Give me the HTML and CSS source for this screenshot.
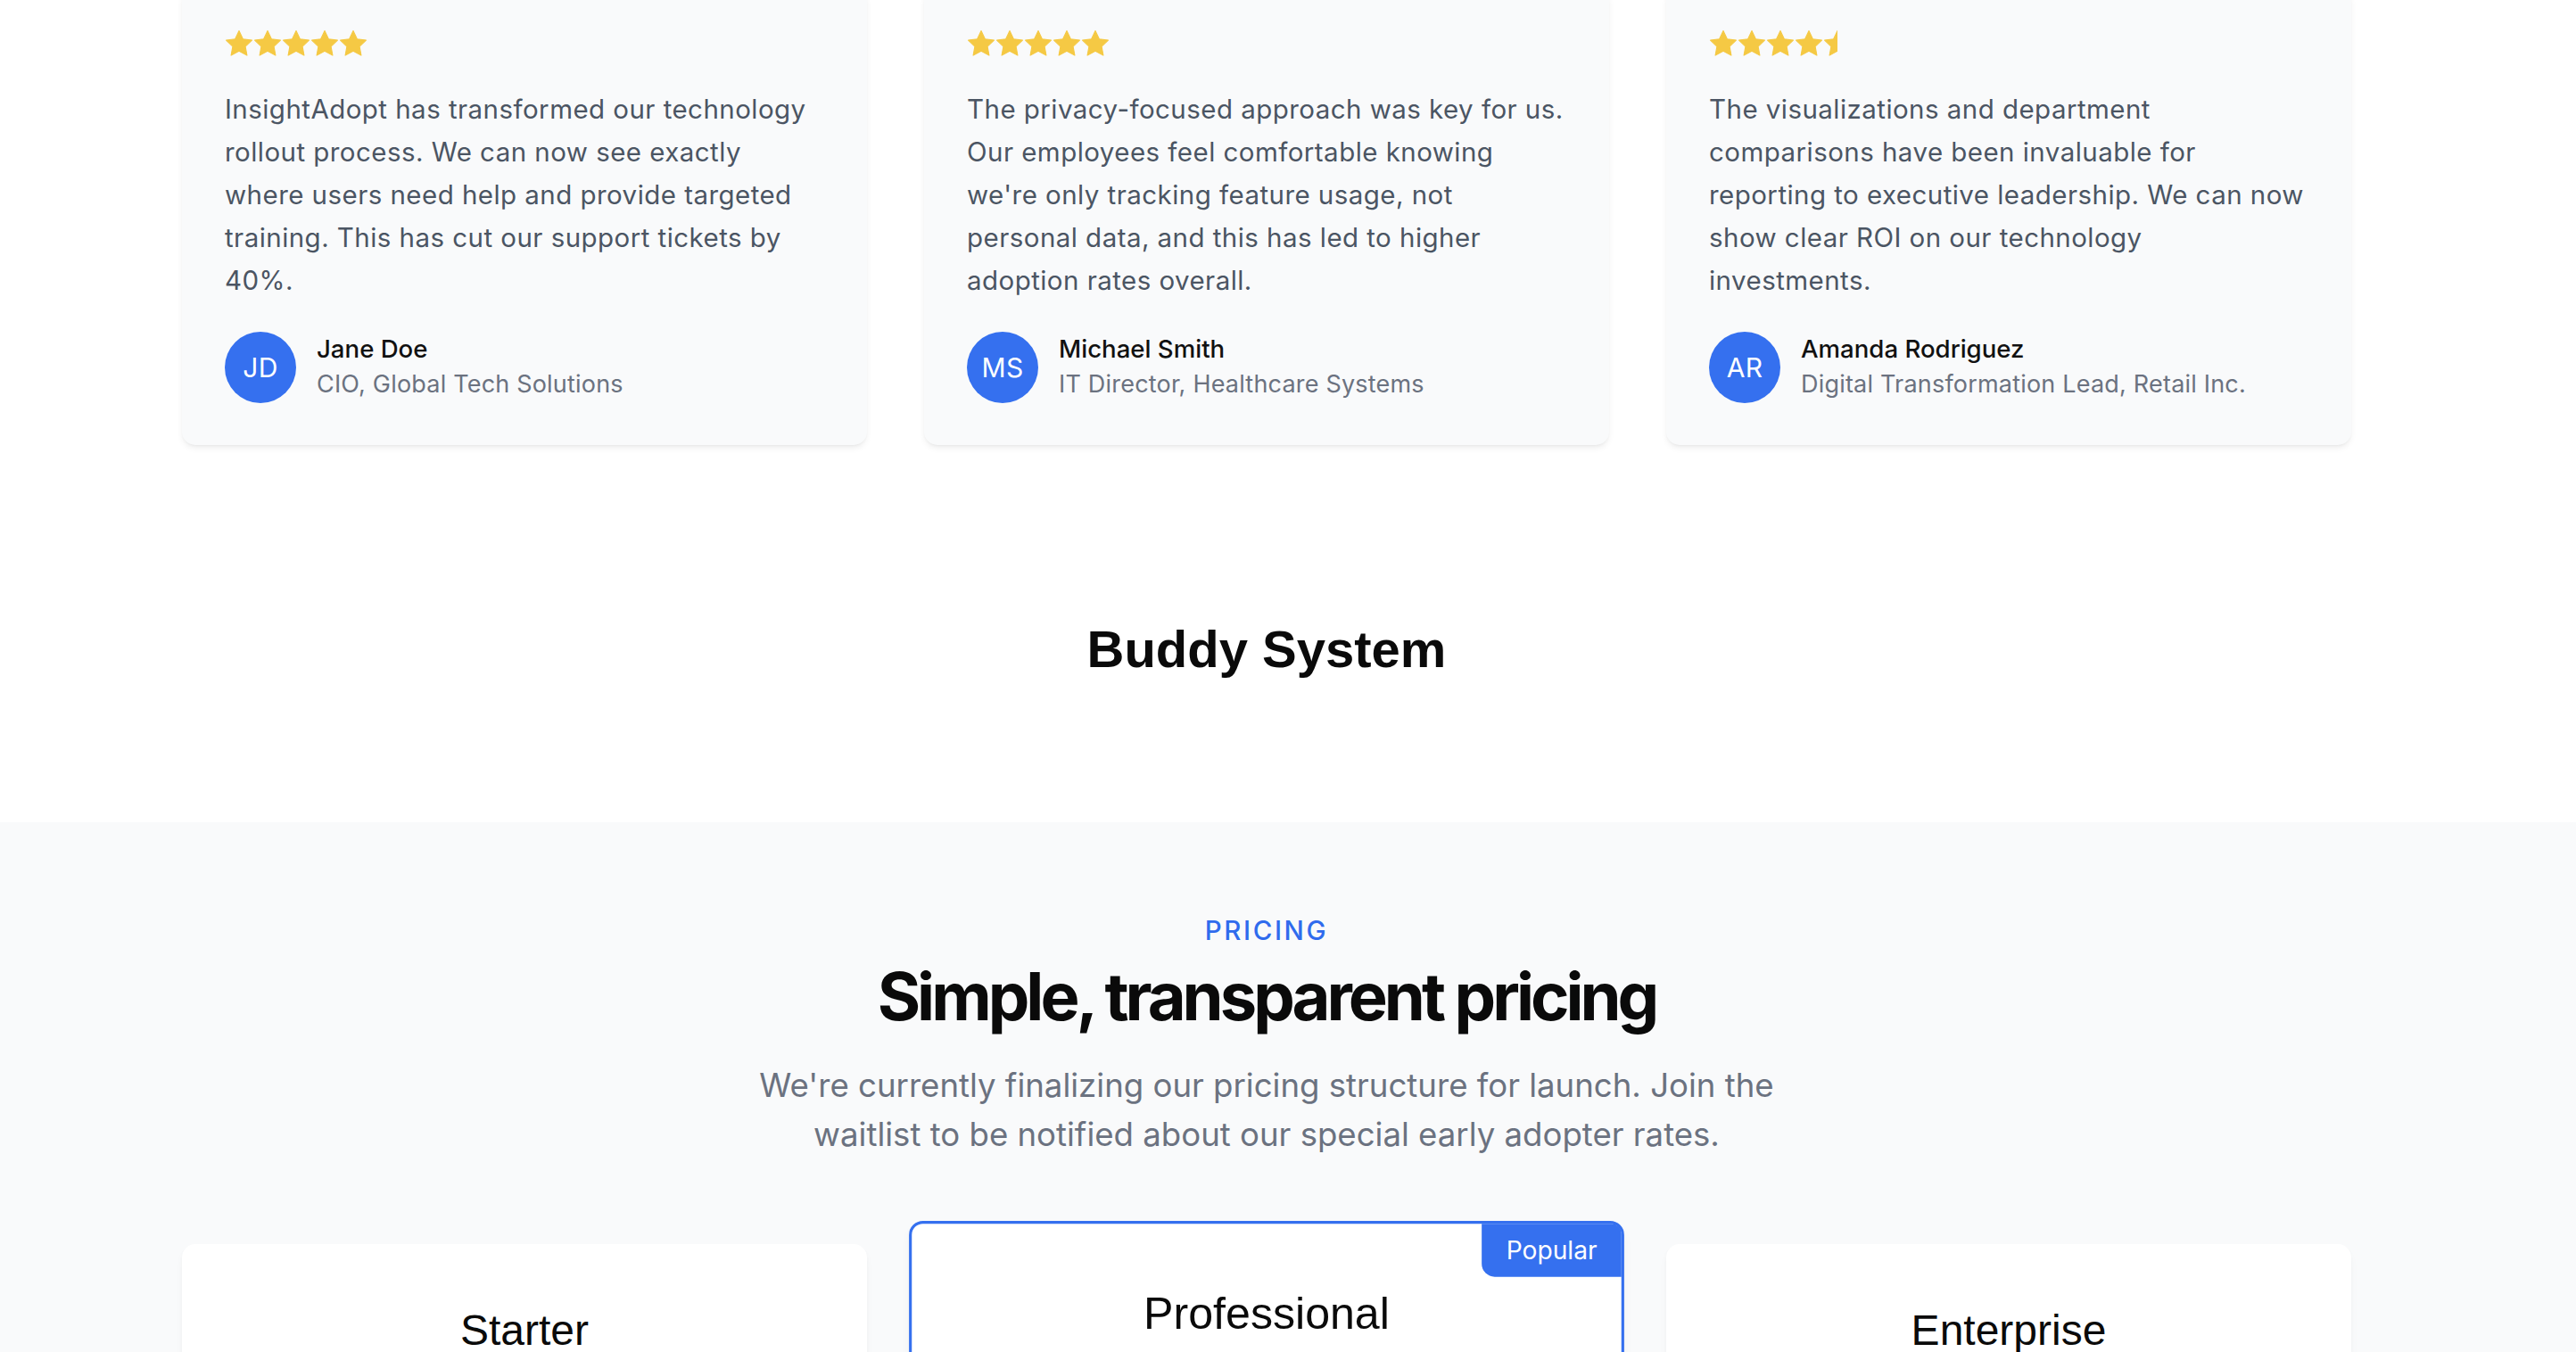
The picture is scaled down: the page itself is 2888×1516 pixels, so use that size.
FILE: index.html
```html
<!DOCTYPE html>
<html lang="en">
<head>
<meta charset="utf-8">
<title>InsightAdopt — Testimonials &amp; Pricing</title>
<link rel="stylesheet" href="styles.css">
</head>
<body>
<div class="page">
  <section class="testimonials">
    <div class="inner grid3 t-grid">
      <article class="t-card">
        <div class="stars">
          <svg class="star" viewBox="0 0 24 24"><polygon points="12,1.2 15.29,8.07 22.84,9.08 17.33,14.33 18.7,21.82 12,18.2 5.3,21.82 6.67,14.33 1.16,9.08 8.71,8.07"/></svg>
          <svg class="star" viewBox="0 0 24 24"><polygon points="12,1.2 15.29,8.07 22.84,9.08 17.33,14.33 18.7,21.82 12,18.2 5.3,21.82 6.67,14.33 1.16,9.08 8.71,8.07"/></svg>
          <svg class="star" viewBox="0 0 24 24"><polygon points="12,1.2 15.29,8.07 22.84,9.08 17.33,14.33 18.7,21.82 12,18.2 5.3,21.82 6.67,14.33 1.16,9.08 8.71,8.07"/></svg>
          <svg class="star" viewBox="0 0 24 24"><polygon points="12,1.2 15.29,8.07 22.84,9.08 17.33,14.33 18.7,21.82 12,18.2 5.3,21.82 6.67,14.33 1.16,9.08 8.71,8.07"/></svg>
          <svg class="star" viewBox="0 0 24 24"><polygon points="12,1.2 15.29,8.07 22.84,9.08 17.33,14.33 18.7,21.82 12,18.2 5.3,21.82 6.67,14.33 1.16,9.08 8.71,8.07"/></svg>
        </div>
        <p class="quote">InsightAdopt has transformed our technology rollout process. We can now see exactly where users need help and provide targeted training. This has cut our support tickets by 40%.</p>
        <div class="author">
          <div class="avatar">JD</div>
          <div class="who">
            <div class="name">Jane Doe</div>
            <div class="role">CIO, Global Tech Solutions</div>
          </div>
        </div>
      </article>

      <article class="t-card">
        <div class="stars">
          <svg class="star" viewBox="0 0 24 24"><polygon points="12,1.2 15.29,8.07 22.84,9.08 17.33,14.33 18.7,21.82 12,18.2 5.3,21.82 6.67,14.33 1.16,9.08 8.71,8.07"/></svg>
          <svg class="star" viewBox="0 0 24 24"><polygon points="12,1.2 15.29,8.07 22.84,9.08 17.33,14.33 18.7,21.82 12,18.2 5.3,21.82 6.67,14.33 1.16,9.08 8.71,8.07"/></svg>
          <svg class="star" viewBox="0 0 24 24"><polygon points="12,1.2 15.29,8.07 22.84,9.08 17.33,14.33 18.7,21.82 12,18.2 5.3,21.82 6.67,14.33 1.16,9.08 8.71,8.07"/></svg>
          <svg class="star" viewBox="0 0 24 24"><polygon points="12,1.2 15.29,8.07 22.84,9.08 17.33,14.33 18.7,21.82 12,18.2 5.3,21.82 6.67,14.33 1.16,9.08 8.71,8.07"/></svg>
          <svg class="star" viewBox="0 0 24 24"><polygon points="12,1.2 15.29,8.07 22.84,9.08 17.33,14.33 18.7,21.82 12,18.2 5.3,21.82 6.67,14.33 1.16,9.08 8.71,8.07"/></svg>
        </div>
        <p class="quote">The privacy-focused approach was key for us. Our employees feel comfortable knowing we're only tracking feature usage, not personal data, and this has led to higher adoption rates overall.</p>
        <div class="author">
          <div class="avatar">MS</div>
          <div class="who">
            <div class="name">Michael Smith</div>
            <div class="role">IT Director, Healthcare Systems</div>
          </div>
        </div>
      </article>

      <article class="t-card">
        <div class="stars">
          <svg class="star" viewBox="0 0 24 24"><polygon points="12,1.2 15.29,8.07 22.84,9.08 17.33,14.33 18.7,21.82 12,18.2 5.3,21.82 6.67,14.33 1.16,9.08 8.71,8.07"/></svg>
          <svg class="star" viewBox="0 0 24 24"><polygon points="12,1.2 15.29,8.07 22.84,9.08 17.33,14.33 18.7,21.82 12,18.2 5.3,21.82 6.67,14.33 1.16,9.08 8.71,8.07"/></svg>
          <svg class="star" viewBox="0 0 24 24"><polygon points="12,1.2 15.29,8.07 22.84,9.08 17.33,14.33 18.7,21.82 12,18.2 5.3,21.82 6.67,14.33 1.16,9.08 8.71,8.07"/></svg>
          <svg class="star" viewBox="0 0 24 24"><polygon points="12,1.2 15.29,8.07 22.84,9.08 17.33,14.33 18.7,21.82 12,18.2 5.3,21.82 6.67,14.33 1.16,9.08 8.71,8.07"/></svg>
          <svg class="star star-half" viewBox="0 0 12 24"><polygon points="12,1.2 15.29,8.07 22.84,9.08 17.33,14.33 18.7,21.82 12,18.2 5.3,21.82 6.67,14.33 1.16,9.08 8.71,8.07"/></svg>
        </div>
        <p class="quote">The visualizations and department comparisons have been invaluable for reporting to executive leadership. We can now show clear ROI on our technology investments.</p>
        <div class="author">
          <div class="avatar">AR</div>
          <div class="who">
            <div class="name">Amanda Rodriguez</div>
            <div class="role">Digital Transformation Lead, Retail Inc.</div>
          </div>
        </div>
      </article>
    </div>
  </section>

  <section class="buddy">
    <h2 class="buddy-title">Buddy System</h2>
  </section>

  <section class="pricing">
    <div class="inner">
      <div class="eyebrow">PRICING</div>
      <h2 class="p-title">Simple, transparent pricing</h2>
      <p class="p-sub">We're currently finalizing our pricing structure for launch. Join the waitlist to be notified about our special early adopter rates.</p>
      <div class="grid3 plans">
        <div class="plan">
          <h3 class="plan-name">Starter</h3>
        </div>
        <div class="plan plan-pop">
          <span class="badge">Popular</span>
          <h3 class="plan-name">Professional</h3>
        </div>
        <div class="plan">
          <h3 class="plan-name">Enterprise</h3>
        </div>
      </div>
    </div>
  </section>
</div>
</body>
</html>
```

FILE: styles.css
```css
* { box-sizing: border-box; }

html, body {
  margin: 0;
  padding: 0;
}

body {
  font-family: Inter, "Noto Sans", "Liberation Sans", sans-serif;
  color: #111111;
  background: #ffffff;
}

.page {
  height: 1516px;
  overflow: hidden;
}

section {
  padding-right: 48px;
}

.inner {
  max-width: 2432px;
  margin: 0 auto;
}

.grid3 {
  display: grid;
  grid-template-columns: repeat(3, 1fr);
  column-gap: 64px;
}

/* ---------- Testimonials ---------- */
.t-grid {
  margin-top: -14px;
}

.t-card {
  background: #f9fafb;
  border-radius: 15px;
  padding: 47px 48px 47px 48px;
  box-shadow: 0 4px 8px -2px rgba(0, 0, 0, 0.09), 0 2px 4px -2px rgba(0, 0, 0, 0.06);
}

.stars {
  display: flex;
  height: 32px;
}

.star {
  width: 32px;
  height: 32px;
  display: block;
  fill: #f5c944;
  stroke: #f5c944;
  stroke-width: 0.8;
  stroke-linejoin: round;
}

.star-half {
  width: 16px;
}

.quote {
  margin: 34px 0 33px;
  font-size: 29.5px;
  line-height: 47.9px;
  letter-spacing: 0.45px;
  color: #4b5563;
}

.author {
  display: flex;
  align-items: center;
  gap: 23px;
}

.avatar {
  width: 80px;
  height: 80px;
  border-radius: 50%;
  background: #3570ef;
  color: #ffffff;
  display: flex;
  align-items: center;
  justify-content: center;
  font-size: 30px;
  letter-spacing: 0.3px;
  flex-shrink: 0;
}

.name {
  font-size: 27.6px;
  line-height: 38px;
  color: #111111;
  font-weight: 500;
}

.role {
  font-size: 27px;
  line-height: 42px;
  letter-spacing: 0.2px;
  color: #6b7280;
}

/* ---------- Buddy System ---------- */
.buddy {
  padding-top: 194px;
  padding-bottom: 159px;
  text-align: center;
}

.buddy-title {
  margin: 0;
  font-family: "Liberation Sans", Arial, sans-serif;
  font-weight: 700;
  font-size: 58px;
  line-height: 70px;
  color: #0a0a0a;
}

/* ---------- Pricing ---------- */
.pricing {
  background: #f9fafb;
  padding-top: 99px;
  text-align: center;
}

.eyebrow {
  font-size: 29.5px;
  line-height: 44px;
  font-weight: 500;
  letter-spacing: 2.6px;
  color: #2f6bed;
}

.p-title {
  margin: 8px 0 0;
  font-size: 74px;
  line-height: 88px;
  font-weight: 700;
  letter-spacing: -4px;
  color: #0a0a0a;
}

.p-sub {
  margin: 29px auto 0;
  max-width: 1238px;
  font-size: 36.6px;
  line-height: 55px;
  color: #6b7280;
}

.plans {
  margin-top: 95px;
}

.plan {
  position: relative;
  background: #ffffff;
  border-radius: 15px;
  min-height: 1182px;
  padding-top: 64px;
  box-shadow: 0 6px 14px -4px rgba(0, 0, 0, 0.06), 0 2px 6px -2px rgba(0, 0, 0, 0.04);
}

.plan-name {
  margin: 0;
  font-family: "Liberation Sans", Arial, sans-serif;
  font-weight: 400;
  font-size: 48px;
  line-height: 66px;
  color: #0a0a0a;
}

.plan-pop {
  border: 3.7px solid #3570ef;
  transform: scale(1.044);
}

.badge {
  position: absolute;
  top: 0;
  right: 0;
  background: #3570ef;
  color: #ffffff;
  font-size: 27px;
  line-height: 37px;
  padding: 10px 26px;
  border-radius: 0 11px 0 14px;
}
```
